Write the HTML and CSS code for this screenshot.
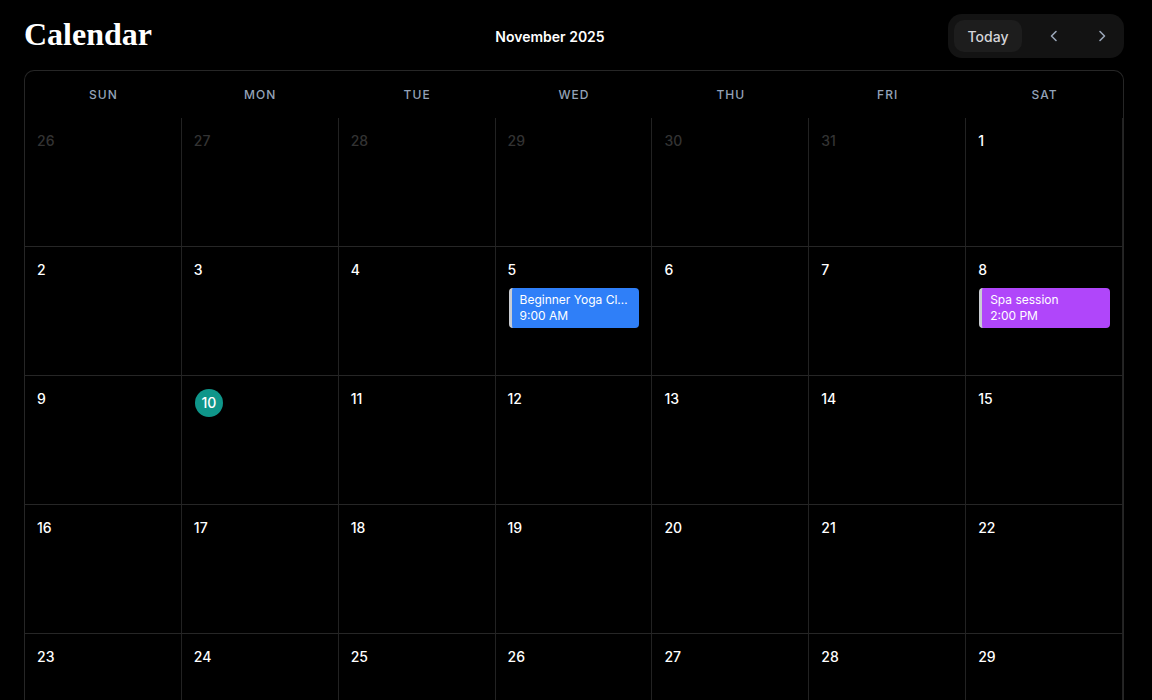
FILE: index.html
```html
<!DOCTYPE html>
<html lang="en">
<head>
<meta charset="utf-8">
<title>Calendar</title>
<link rel="stylesheet" href="styles.css">
</head>
<body>
<header class="topbar">
  <h1 class="title">Calendar</h1>
  <div class="month">November 2025</div>
  <div class="toolbar">
    <button class="today-btn">Today</button>
    <button class="nav-btn" aria-label="Previous month">
      <svg width="16" height="16" viewBox="0 0 16 16"><path d="M10 3.5L5.5 8L10 12.5" fill="none" stroke="currentColor" stroke-width="1.6" stroke-linecap="round" stroke-linejoin="round"/></svg>
    </button>
    <button class="nav-btn" aria-label="Next month">
      <svg width="16" height="16" viewBox="0 0 16 16"><path d="M6 3.5L10.5 8L6 12.5" fill="none" stroke="currentColor" stroke-width="1.6" stroke-linecap="round" stroke-linejoin="round"/></svg>
    </button>
  </div>
</header>

<main class="calendar">
  <div class="weekdays">
    <div>Sun</div><div>Mon</div><div>Tue</div><div>Wed</div><div>Thu</div><div>Fri</div><div>Sat</div>
  </div>
  <div class="grid">
    <div class="cell muted"><span class="date">26</span></div>
    <div class="cell muted"><span class="date">27</span></div>
    <div class="cell muted"><span class="date">28</span></div>
    <div class="cell muted"><span class="date">29</span></div>
    <div class="cell muted"><span class="date">30</span></div>
    <div class="cell muted"><span class="date">31</span></div>
    <div class="cell"><span class="date">1</span></div>

    <div class="cell"><span class="date">2</span></div>
    <div class="cell"><span class="date">3</span></div>
    <div class="cell"><span class="date">4</span></div>
    <div class="cell"><span class="date">5</span>
      <div class="event blue"><div class="ev-title">Beginner Yoga Class</div><div class="ev-time">9:00 AM</div></div>
    </div>
    <div class="cell"><span class="date">6</span></div>
    <div class="cell"><span class="date">7</span></div>
    <div class="cell"><span class="date">8</span>
      <div class="event purple"><div class="ev-title">Spa session</div><div class="ev-time">2:00 PM</div></div>
    </div>

    <div class="cell"><span class="date">9</span></div>
    <div class="cell"><span class="date today">10</span></div>
    <div class="cell"><span class="date">11</span></div>
    <div class="cell"><span class="date">12</span></div>
    <div class="cell"><span class="date">13</span></div>
    <div class="cell"><span class="date">14</span></div>
    <div class="cell"><span class="date">15</span></div>

    <div class="cell"><span class="date">16</span></div>
    <div class="cell"><span class="date">17</span></div>
    <div class="cell"><span class="date">18</span></div>
    <div class="cell"><span class="date">19</span></div>
    <div class="cell"><span class="date">20</span></div>
    <div class="cell"><span class="date">21</span></div>
    <div class="cell"><span class="date">22</span></div>

    <div class="cell"><span class="date">23</span></div>
    <div class="cell"><span class="date">24</span></div>
    <div class="cell"><span class="date">25</span></div>
    <div class="cell"><span class="date">26</span></div>
    <div class="cell"><span class="date">27</span></div>
    <div class="cell"><span class="date">28</span></div>
    <div class="cell"><span class="date">29</span></div>
  </div>
</main>
</body>
</html>
```

FILE: styles.css
```css
* { box-sizing: border-box; }

html, body {
  margin: 0;
  background: #000;
  color: #fff;
  font-family: Inter, "Noto Sans", sans-serif;
}

body {
  padding: 14px 28px 0 24px;
  height: 700px;
  overflow: hidden;
}

.topbar {
  display: flex;
  align-items: center;
  justify-content: space-between;
  height: 44px;
  margin-bottom: 12px;
}

.title {
  margin: 0;
  font-family: "Liberation Serif", "DejaVu Serif", serif;
  font-weight: 700;
  font-size: 32px;
  line-height: 40px;
  color: #fff;
  position: relative;
  top: -2px;
}

.month {
  font-size: 14px;
  font-weight: 600;
  color: #fff;
}

.toolbar {
  display: flex;
  align-items: center;
  gap: 16px;
  padding: 6px;
  background: #131313;
  border-radius: 14px;
}

.toolbar button {
  border: 0;
  margin: 0;
  font-family: inherit;
  cursor: pointer;
}

.today-btn {
  width: 68px;
  height: 32px;
  border-radius: 10px;
  background: #1d1d1d;
  color: #d4d4d8;
  font-size: 14px;
  font-weight: 500;
}

.nav-btn {
  width: 32px;
  height: 32px;
  padding: 0;
  display: flex;
  align-items: center;
  justify-content: center;
  background: transparent;
  color: #9aa6b8;
  border-radius: 8px;
}

.calendar {
  border: 1px solid #262626;
  border-bottom: 0;
  border-radius: 10px 10px 0 0;
  overflow: hidden;
}

.weekdays {
  display: grid;
  grid-template-columns: repeat(7, 1fr);
  height: 47px;
}

.weekdays div {
  display: flex;
  align-items: center;
  justify-content: center;
  font-size: 12px;
  font-weight: 500;
  letter-spacing: 0.09em;
  text-transform: uppercase;
  color: #94a3b8;
}

.grid {
  display: grid;
  grid-template-columns: repeat(7, 1fr);
  grid-auto-rows: 129px;
}

.cell {
  border-right: 1px solid #222;
  border-bottom: 1px solid #262626;
  padding: 13px 12px 0 12px;
  min-width: 0;
}

.date {
  display: block;
  font-size: 14px;
  line-height: 20px;
  font-weight: 500;
  color: #fff;
}

.muted .date {
  color: #333;
}

.date.today {
  display: flex;
  align-items: center;
  justify-content: center;
  width: 28px;
  height: 28px;
  margin-left: 1px;
  border-radius: 50%;
  background: #0f968a;
  color: #fff;
  line-height: 28px;
}

.event {
  margin-top: 8px;
  margin-left: 1px;
  padding: 4px 8px;
  border-left: 3px solid #c9ccd2;
  border-radius: 4px;
  font-size: 12px;
  line-height: 16px;
  color: #fff;
}

.event.blue { background: #2f7ff8; }
.event.purple { background: #b046fa; }

.ev-title, .ev-time {
  white-space: nowrap;
  overflow: hidden;
  text-overflow: ellipsis;
}
```
